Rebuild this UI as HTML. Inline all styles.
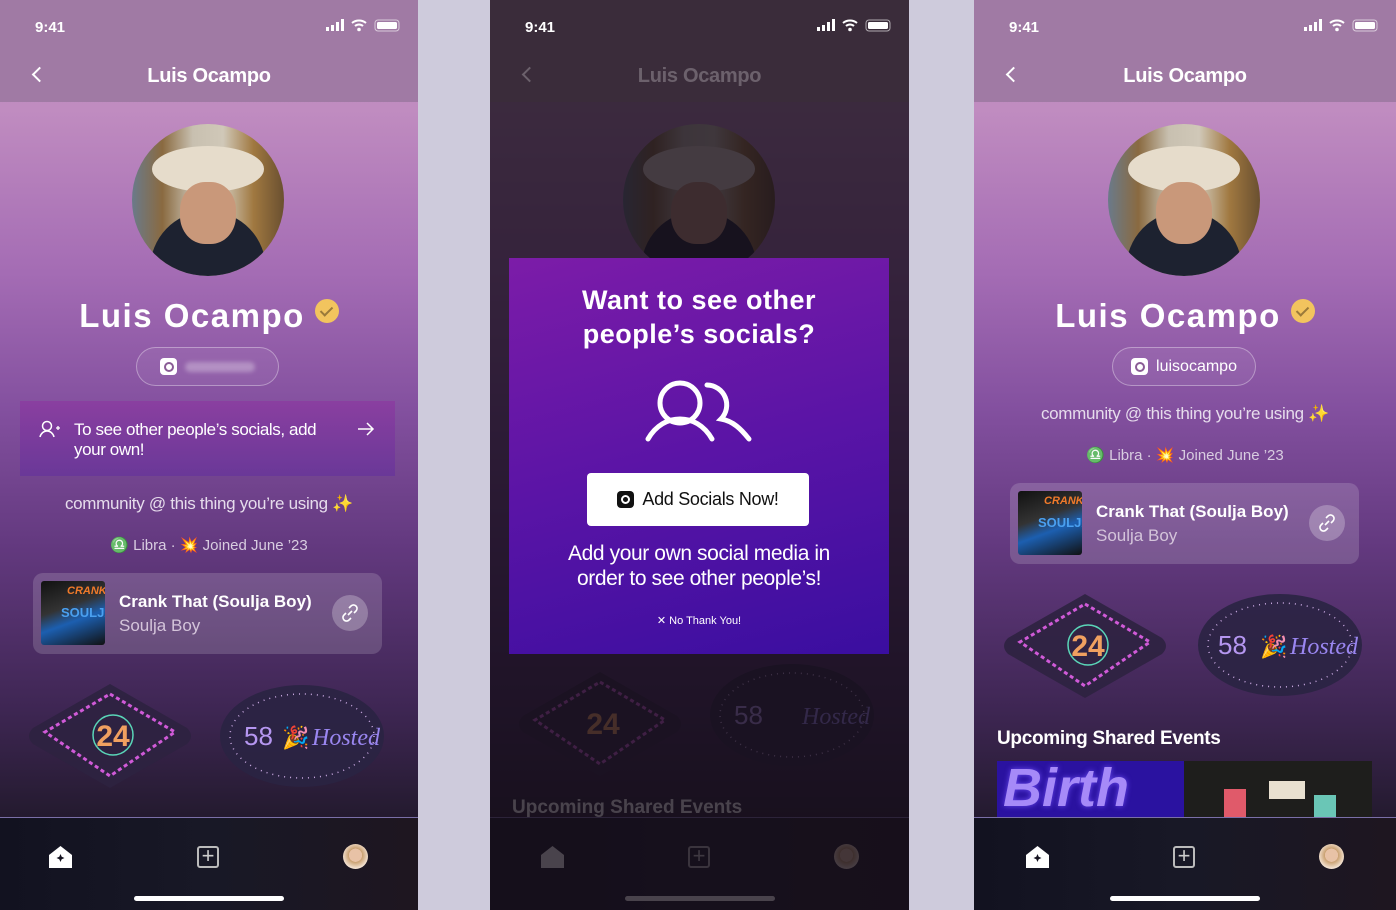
<!DOCTYPE html>
<html><head><meta charset="utf-8"><style>
*{margin:0;padding:0;box-sizing:border-box}
body{width:1396px;height:910px;background:#cecbdc;position:relative;overflow:hidden;font-family:"Liberation Sans",sans-serif;color:#fff}
.ph{position:absolute;top:0;height:910px;overflow:hidden}
.bg{position:absolute;left:0;top:0;width:100%;height:910px;background:linear-gradient(180deg,#b583b7 0%,#c08cc0 12%,#a46cb4 30%,#83509f 45%,#63397f 60%,#3e2653 78%,#231a2e 90%)}
.hdr{position:absolute;left:0;top:0;width:100%;height:102px;background:#a07aa4}
.t941{position:absolute;left:35px;top:19px;font-size:15px;font-weight:bold}
.sb{position:absolute;right:16px;top:19px}
.ttl{position:absolute;left:0;width:100%;top:65px;text-align:center;font-size:20px;font-weight:bold;letter-spacing:-.3px}
.back{position:absolute;left:34px;top:69px;width:11px;height:11px;border-left:2.5px solid #fff;border-bottom:2.5px solid #fff;transform:rotate(45deg)}
.av{position:absolute;width:152px;height:152px;border-radius:50%;overflow:hidden;background:linear-gradient(90deg,#6a7a8a 0%,#8a6a40 20%,#c8c0b0 40%,#d0c8b8 60%,#a07840 80%,#6a5030 100%)}
.av:before{content:"";position:absolute;left:20px;top:22px;width:112px;height:46px;border-radius:50%;background:#e6dccb}
.av:after{content:"";position:absolute;left:48px;top:58px;width:56px;height:62px;border-radius:45%;background:#c9987a;box-shadow:0 60px 0 30px #1d2230}
.nm{position:absolute;left:0;width:100%;text-align:center;font-size:33px;letter-spacing:1.5px;font-weight:bold}
.chk{display:inline-block;width:24px;height:24px;border-radius:50%;background:#f2c45e;vertical-align:4px;margin-left:10px;position:relative}
.chk:after{content:"";position:absolute;left:8px;top:5px;width:5px;height:10px;border-right:2px solid #9a7a3a;border-bottom:2px solid #9a7a3a;transform:rotate(45deg)}
.pill{position:absolute;height:39px;border:1px solid rgba(255,255,255,.35);border-radius:20px;background:rgba(255,255,255,.06);font-size:16px;display:flex;align-items:center;justify-content:center;gap:8px}
.ig{width:17px;height:17px;background:#fff;border-radius:4px;position:relative;display:inline-block}
.ig:after{content:"";position:absolute;left:4px;top:4px;width:6px;height:6px;border:2px solid #8a5c96;border-radius:50%}
.txt{position:absolute;left:0;width:100%;text-align:center;font-size:17px;color:#e6dcec;letter-spacing:-.3px}
.sm{position:absolute;left:0;width:100%;text-align:center;font-size:15px;color:#d8cce0}
.card{position:absolute;height:81px;border-radius:10px;background:rgba(255,255,255,.16)}
.art{position:absolute;left:8px;top:8px;width:64px;height:64px;border-radius:3px;overflow:hidden;background:linear-gradient(160deg,#111 0%,#333 40%,#1c5fb0 60%,#111 100%)}
.art b{position:absolute;left:26px;top:4px;color:#f07a2a;font-size:11px;font-style:italic}
.art i{position:absolute;left:20px;top:24px;color:#4aa0f0;font-size:13px;font-weight:bold;font-style:normal}
.st{position:absolute;left:86px;top:19px;font-size:17px;font-weight:bold}
.sa{position:absolute;left:86px;top:43px;font-size:17px;color:#d4c4da}
.lk{position:absolute;right:14px;top:22px;width:36px;height:36px;border-radius:50%;background:rgba(255,255,255,.25);display:flex;align-items:center;justify-content:center}
.nav{position:absolute;left:0;top:817px;width:100%;height:93px;background:linear-gradient(90deg,#121220,#181826 50%,#1e1620);border-top:1px solid #7a6fa8}
.hi{position:absolute;top:896px;width:150px;height:5px;border-radius:3px;background:#fff}
.plus{position:absolute;top:846px;width:22px;height:22px;border:2px solid #bbb;border-radius:3px;color:#ccc;font-size:22px;line-height:16px;text-align:center}
.home{position:absolute;top:845px}
.me{position:absolute;top:844px;width:25px;height:25px;border-radius:50%;background:radial-gradient(circle at 50% 45%,#e8c2a6 0 35%,#c9a070 36%,#f3e2d2 70%)}
</style></head><body>

<!-- PHONE 1 -->
<div class="ph" style="left:0;width:418px">
<div class="bg"></div>
<div class="hdr"></div>
<div class="t941">9:41</div>
<svg class="sb" width="76" height="14" viewBox="0 0 76 14"><rect x="0" y="8" width="3" height="4" fill="#fff"/><rect x="5" y="6" width="3" height="6" fill="#fff"/><rect x="10" y="3" width="3" height="9" fill="#fff"/><rect x="15" y="0" width="3" height="12" fill="#fff"/><path d="M26 4a11 11 0 0 1 14 0M29 7a6 6 0 0 1 8 0" stroke="#fff" stroke-width="2" fill="none"/><circle cx="33" cy="10.5" r="1.8" fill="#fff"/><rect x="49" y="1" width="24" height="11" rx="3" stroke="#fff" fill="none" opacity=".6"/><rect x="51" y="3" width="20" height="7" rx="1.5" fill="#fff"/></svg>
<div class="back"></div>
<div class="ttl">Luis Ocampo</div>
<div class="av" style="left:132px;top:124px"></div>
<div class="nm" style="top:297px">Luis Ocampo<span class="chk"></span></div>
<div class="pill" style="left:136px;top:347px;width:143px"><span class="ig"></span><span style="width:70px;height:10px;border-radius:5px;background:rgba(255,255,255,.3);filter:blur(2px)"></span></div>
<div style="position:absolute;left:20px;top:401px;width:375px;height:75px;background:linear-gradient(180deg,#8a3fa0,#6a3898)"></div>
<svg style="position:absolute;left:39px;top:420px" width="22" height="18" viewBox="0 0 22 18"><circle cx="8" cy="6" r="4.5" stroke="#fff" stroke-width="1.5" fill="none"/><path d="M1 17c1-4 4-6 7-6s6 2 7 6" stroke="#fff" stroke-width="1.5" fill="none"/><path d="M17 8h4M19 6v4" stroke="#fff" stroke-width="1.3"/></svg>
<div style="position:absolute;left:74px;top:420px;font-size:17px;line-height:20px;width:272px;letter-spacing:-.4px">To see other people’s socials, add your own!</div>
<svg style="position:absolute;left:357px;top:421px" width="18" height="16" viewBox="0 0 18 16"><path d="M1 8h15M10 2l6 6-6 6" stroke="#fff" stroke-width="1.5" fill="none"/></svg>
<div class="txt" style="top:494px">community @ this thing you’re using ✨</div>
<div class="sm" style="top:536px">♎ Libra · 💥 Joined June ’23</div>
<div class="card" style="left:33px;top:573px;width:349px"><div class="art"><b>CRANK</b><i>SOULJA</i></div><div class="st">Crank That (Soulja Boy)</div><div class="sa">Soulja Boy</div><div class="lk"><svg width="20" height="20" viewBox="0 0 20 20"><path d="M8 12l4-4M9 5l2-2a3 3 0 0 1 5 5l-2 2M11 15l-2 2a3 3 0 0 1-5-5l2-2" stroke="#fff" stroke-width="1.6" fill="none"/></svg></div></div>
<svg style="position:absolute;left:25px;top:680px" width="170" height="112" viewBox="0 0 170 112"><path d="M85 4L162 48Q170 56 162 64L85 108L8 64Q0 56 8 48Z" fill="#2e2240" opacity=".9"/><path d="M85 14L150 52L85 96L20 52Z" fill="none" stroke="#d05ad8" stroke-width="3" stroke-dasharray="4 3"/><circle cx="88" cy="55" r="20" fill="none" stroke="#5ad6b8" stroke-width="1.5"/><text x="88" y="66" text-anchor="middle" font-size="30" font-weight="bold" fill="#f0a060" font-family="Liberation Sans">24</text></svg>
<svg style="position:absolute;left:218px;top:683px" width="168" height="106" viewBox="0 0 168 106"><ellipse cx="84" cy="53" rx="82" ry="51" fill="#2a2342" opacity=".9"/><ellipse cx="84" cy="53" rx="72" ry="42" fill="none" stroke="#c8a8e0" stroke-width="1.5" stroke-dasharray="1 5"/><text x="26" y="62" font-size="26" fill="#b596f0" font-family="Liberation Sans">58</text><text x="64" y="62" font-size="22" fill="#5ad6f0">🎉</text><text x="94" y="62" font-size="24" font-style="italic" fill="#9a86f0" font-family="Liberation Serif">Hosted</text></svg>
<div class="nav"></div>
<svg class="home" style="left:48px" width="25" height="24" viewBox="0 0 25 24"><path d="M1 10L12.5 1L24 10V23H1Z" fill="#fff"/><path d="M12.5 9l1.2 2.8 2.8 1.2-2.8 1.2-1.2 2.8-1.2-2.8-2.8-1.2 2.8-1.2z" fill="#151320"/></svg>
<div class="plus" style="left:197px">+</div>
<div class="me" style="left:343px"></div>
<div class="hi" style="left:134px"></div>
</div>

<!-- PHONE 2 -->
<div class="ph" style="left:490px;width:419px">
<div class="bg"></div>
<div class="hdr"></div>
<div class="av" style="left:133px;top:124px"></div>
<svg style="position:absolute;left:25px;top:668px" width="170" height="112" viewBox="0 0 170 112"><path d="M85 4L162 48Q170 56 162 64L85 108L8 64Q0 56 8 48Z" fill="#2e2240"/><path d="M85 14L150 52L85 96L20 52Z" fill="none" stroke="#d05ad8" stroke-width="3" stroke-dasharray="4 3"/><text x="88" y="66" text-anchor="middle" font-size="30" font-weight="bold" fill="#f0a060" font-family="Liberation Sans">24</text></svg>
<svg style="position:absolute;left:218px;top:662px" width="168" height="106" viewBox="0 0 168 106"><ellipse cx="84" cy="53" rx="82" ry="51" fill="#2a2342"/><ellipse cx="84" cy="53" rx="72" ry="42" fill="none" stroke="#c8a8e0" stroke-width="1.5" stroke-dasharray="1 5"/><text x="26" y="62" font-size="26" fill="#b596f0" font-family="Liberation Sans">58</text><text x="94" y="62" font-size="24" font-style="italic" fill="#9a86f0" font-family="Liberation Serif">Hosted</text></svg>
<div style="position:absolute;left:22px;top:797px;font-size:19px;font-weight:bold">Upcoming Shared Events</div>
<div class="nav"></div>
<svg class="home" style="left:50px" width="25" height="24" viewBox="0 0 25 24"><path d="M1 10L12.5 1L24 10V23H1Z" fill="#fff"/></svg>
<div class="plus" style="left:198px">+</div>
<div class="me" style="left:344px"></div>
<div class="hi" style="left:135px"></div>
<div style="position:absolute;left:0;top:102px;width:100%;height:808px;background:rgba(22,14,26,.78)"></div>
<div style="position:absolute;left:0;top:0;width:100%;height:102px;background:rgba(40,30,40,.85)"></div>
<div class="t941">9:41</div>
<div class="back" style="opacity:.25"></div>
<div class="ttl" style="opacity:.25">Luis Ocampo</div>
<svg class="sb" width="76" height="14" viewBox="0 0 76 14"><rect x="0" y="8" width="3" height="4" fill="#fff"/><rect x="5" y="6" width="3" height="6" fill="#fff"/><rect x="10" y="3" width="3" height="9" fill="#fff"/><rect x="15" y="0" width="3" height="12" fill="#fff"/><path d="M26 4a11 11 0 0 1 14 0M29 7a6 6 0 0 1 8 0" stroke="#fff" stroke-width="2" fill="none"/><circle cx="33" cy="10.5" r="1.8" fill="#fff"/><rect x="49" y="1" width="24" height="11" rx="3" stroke="#fff" fill="none" opacity=".6"/><rect x="51" y="3" width="20" height="7" rx="1.5" fill="#fff"/></svg>
<div style="position:absolute;left:19px;top:258px;width:380px;height:396px;background:linear-gradient(165deg,#7c1ca8 0%,#5a14a6 50%,#3a0ea0 100%)">
 <div style="position:absolute;left:0;width:100%;top:25px;text-align:center;font-size:27px;line-height:34px;font-weight:bold;letter-spacing:.5px">Want to see other<br>people’s socials?</div>
 <svg style="position:absolute;left:136px;top:121px" width="108" height="64" viewBox="0 0 108 64"><circle cx="35" cy="24" r="20" stroke="#fff" stroke-width="5" fill="none"/><path d="M3 60c8-14 20-20 32-20s24 6 32 20" stroke="#fff" stroke-width="5" fill="none" stroke-linecap="round"/><path d="M62 6a20 20 0 0 1 14 34c12 2 20 10 28 20" stroke="#fff" stroke-width="5" fill="none" stroke-linecap="round"/></svg>
 <div style="position:absolute;left:78px;top:215px;width:222px;height:53px;background:#fff;border-radius:4px;color:#111;font-size:18px;display:flex;align-items:center;justify-content:center;gap:8px;letter-spacing:-.3px"><span style="width:17px;height:17px;background:#111;border-radius:4px;position:relative;display:inline-block"><span style="position:absolute;left:4px;top:4px;width:9px;height:9px;border:2px solid #fff;border-radius:50%"></span></span>Add Socials Now!</div>
 <div style="position:absolute;left:0;width:100%;top:283px;text-align:center;font-size:21px;line-height:25px;letter-spacing:-.4px">Add your own social media in<br>order to see other people’s!</div>
 <div style="position:absolute;left:0;width:100%;top:356px;text-align:center;font-size:11px">✕ No Thank You!</div>
</div>
</div>

<!-- PHONE 3 -->
<div class="ph" style="left:974px;width:422px">
<div class="bg"></div>
<div class="hdr"></div>
<div class="t941">9:41</div>
<svg class="sb" width="76" height="14" viewBox="0 0 76 14"><rect x="0" y="8" width="3" height="4" fill="#fff"/><rect x="5" y="6" width="3" height="6" fill="#fff"/><rect x="10" y="3" width="3" height="9" fill="#fff"/><rect x="15" y="0" width="3" height="12" fill="#fff"/><path d="M26 4a11 11 0 0 1 14 0M29 7a6 6 0 0 1 8 0" stroke="#fff" stroke-width="2" fill="none"/><circle cx="33" cy="10.5" r="1.8" fill="#fff"/><rect x="49" y="1" width="24" height="11" rx="3" stroke="#fff" fill="none" opacity=".6"/><rect x="51" y="3" width="20" height="7" rx="1.5" fill="#fff"/></svg>
<div class="back"></div>
<div class="ttl">Luis Ocampo</div>
<div class="av" style="left:134px;top:124px"></div>
<div class="nm" style="top:297px">Luis Ocampo<span class="chk"></span></div>
<div class="pill" style="left:138px;top:347px;width:144px"><span class="ig"></span>luisocampo</div>
<div class="txt" style="top:404px">community @ this thing you’re using ✨</div>
<div class="sm" style="top:446px">♎ Libra · 💥 Joined June ’23</div>
<div class="card" style="left:36px;top:483px;width:349px"><div class="art"><b>CRANK</b><i>SOULJA</i></div><div class="st">Crank That (Soulja Boy)</div><div class="sa">Soulja Boy</div><div class="lk"><svg width="20" height="20" viewBox="0 0 20 20"><path d="M8 12l4-4M9 5l2-2a3 3 0 0 1 5 5l-2 2M11 15l-2 2a3 3 0 0 1-5-5l2-2" stroke="#fff" stroke-width="1.6" fill="none"/></svg></div></div>
<svg style="position:absolute;left:26px;top:590px" width="170" height="112" viewBox="0 0 170 112"><path d="M85 4L162 48Q170 56 162 64L85 108L8 64Q0 56 8 48Z" fill="#2e2240" opacity=".9"/><path d="M85 14L150 52L85 96L20 52Z" fill="none" stroke="#d05ad8" stroke-width="3" stroke-dasharray="4 3"/><circle cx="88" cy="55" r="20" fill="none" stroke="#5ad6b8" stroke-width="1.5"/><text x="88" y="66" text-anchor="middle" font-size="30" font-weight="bold" fill="#f0a060" font-family="Liberation Sans">24</text></svg>
<svg style="position:absolute;left:222px;top:592px" width="168" height="106" viewBox="0 0 168 106"><ellipse cx="84" cy="53" rx="82" ry="51" fill="#2a2342" opacity=".9"/><ellipse cx="84" cy="53" rx="72" ry="42" fill="none" stroke="#c8a8e0" stroke-width="1.5" stroke-dasharray="1 5"/><text x="22" y="62" font-size="26" fill="#b596f0" font-family="Liberation Sans">58</text><text x="64" y="62" font-size="22" fill="#5ad6f0">🎉</text><text x="94" y="62" font-size="24" font-style="italic" fill="#9a86f0" font-family="Liberation Serif">Hosted</text></svg>
<div style="position:absolute;left:23px;top:728px;font-size:19px;font-weight:bold;letter-spacing:-.3px">Upcoming Shared Events</div>
<div style="position:absolute;left:23px;top:761px;width:187px;height:56px;background:#2a12a0;overflow:hidden"><div style="font-size:54px;font-weight:bold;color:#a68af8;font-style:italic;margin:-4px 0 0 6px;text-shadow:0 0 6px #6a4af0">Birth</div></div>
<div style="position:absolute;left:210px;top:761px;width:188px;height:56px;background:#1e1e1c"><div style="position:absolute;left:40px;top:28px;width:22px;height:28px;background:#e05a6a"></div><div style="position:absolute;left:85px;top:20px;width:36px;height:18px;background:#e8e0d0"></div><div style="position:absolute;left:130px;top:34px;width:22px;height:22px;background:#6ac6b6"></div></div>
<div class="nav"></div>
<svg class="home" style="left:51px" width="25" height="24" viewBox="0 0 25 24"><path d="M1 10L12.5 1L24 10V23H1Z" fill="#fff"/><path d="M12.5 9l1.2 2.8 2.8 1.2-2.8 1.2-1.2 2.8-1.2-2.8-2.8-1.2 2.8-1.2z" fill="#151320"/></svg>
<div class="plus" style="left:199px">+</div>
<div class="me" style="left:345px"></div>
<div class="hi" style="left:136px"></div>
</div>
</body></html>
